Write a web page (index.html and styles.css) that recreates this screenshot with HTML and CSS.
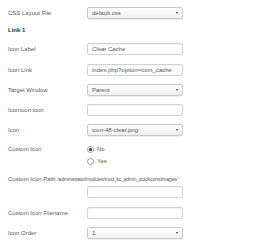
FILE: index.html
```html
<!DOCTYPE html>
<html>
<head>
<meta charset="utf-8">
<link rel="stylesheet" href="styles.css">
</head>
<body>
<div class="form">
  <div class="row r-css">
    <div class="label">CSS Layout File</div>
    <div class="field select"><span>default.css</span><i class="arrow"></i></div>
  </div>
  <div class="heading">Link 1</div>
  <div class="row r-label">
    <div class="label">Icon Label</div>
    <div class="field input"><span>Clear Cache</span></div>
  </div>
  <div class="row r-link">
    <div class="label">Icon Link</div>
    <div class="field input"><span>index.php?option=com_cache</span></div>
  </div>
  <div class="row">
    <div class="label">Target Window</div>
    <div class="field select"><span>Parent</span><i class="arrow"></i></div>
  </div>
  <div class="row">
    <div class="label">Icomoon icon</div>
    <div class="field input"></div>
  </div>
  <div class="row r-icon">
    <div class="label">Icon</div>
    <div class="field select"><span>icon-48-clear.png</span><i class="arrow"></i></div>
  </div>
  <div class="radio-row">
    <div class="label">Custom Icon</div>
    <div class="radios">
      <div class="opt"><span class="radio checked"></span><span>No</span></div>
      <div class="opt"><span class="radio"></span><span>Yes</span></div>
    </div>
  </div>
  <div class="path">Custom Icon Path <span class="dir">/administrator/modules/mod_kc_admin_quickicons/images/</span></div>
  <div class="row r-path">
    <div class="label"></div>
    <div class="field input"></div>
  </div>
  <div class="row r-file">
    <div class="label">Custom Icon Filename</div>
    <div class="field input"></div>
  </div>
  <div class="row">
    <div class="label">Icon Order</div>
    <div class="field select"><span>1</span><i class="arrow"></i></div>
  </div>
</div>
</body>
</html>
```
FILE: styles.css
```css
html, body {
  margin: 0;
  padding: 0;
  background: #fff;
}
.form {
  padding: 7px 0 0 8px;
  font-family: "Liberation Sans", Arial, sans-serif;
  font-size: 6px;
  line-height: 6px;
  color: #5a5a5a;
}
.row {
  display: flex;
  align-items: center;
  height: 12px;
  margin-bottom: 8px;
}
.label {
  width: 79px;
  flex: none;
  white-space: nowrap;
}
.field {
  width: 96px;
  height: 12px;
  box-sizing: border-box;
  border: 1px solid #d2d2d2;
  border-radius: 2px;
  display: flex;
  align-items: center;
  padding: 0 4px;
  color: #555;
  white-space: nowrap;
}
.input {
  background: #fff;
  box-shadow: inset 0 1px 1px rgba(0,0,0,0.05);
}
.select {
  background: linear-gradient(#ffffff, #f0f0f0);
  border-color: #c8c8c8;
  box-shadow: 0 1px 1px rgba(0,0,0,0.07);
  justify-content: space-between;
}
.arrow {
  width: 0;
  height: 0;
  border-left: 1.5px solid transparent;
  border-right: 1.5px solid transparent;
  border-top: 2px solid #333;
}
.heading {
  font-weight: bold;
  color: #333;
  margin-top: 3px;
  margin-bottom: 10px;
}
.r-label { margin-bottom: 9px; }
.r-icon { margin-bottom: 9px; }
.radio-row {
  display: flex;
  align-items: flex-start;
}
.radio-row .label {
  height: 8px;
  line-height: 8px;
}
.radios {
  display: flex;
  flex-direction: column;
  gap: 4px;
}
.opt {
  display: flex;
  align-items: center;
  height: 8px;
  gap: 3px;
}
.radio {
  width: 5px;
  height: 5px;
  border: 1px solid #999;
  border-radius: 50%;
  background: #fff;
  position: relative;
}
.radio.checked::after {
  content: "";
  position: absolute;
  left: 1px;
  top: 1px;
  width: 3px;
  height: 3px;
  border-radius: 50%;
  background: #222;
}
.path {
  margin-top: 11px;
  margin-bottom: 4px;
  white-space: nowrap;
}
.dir {
  font-size: 5px;
  letter-spacing: -0.2px;
}
.r-path { margin-bottom: 9px; }
```
